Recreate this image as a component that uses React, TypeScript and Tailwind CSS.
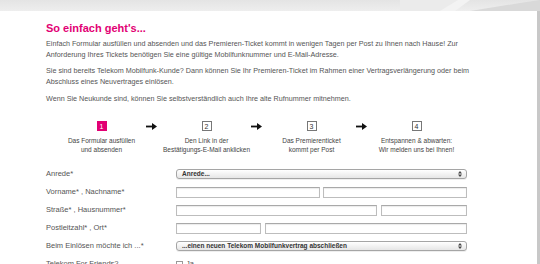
import type { ReactNode } from "react";

const STEPS = [
  { n: 1, lines: ["Das Formular ausfüllen", "und absenden"], active: true },
  { n: 2, lines: ["Den Link in der", "Bestätigungs-E-Mail anklicken"], active: false },
  { n: 3, lines: ["Das Premierenticket", "kommt per Post"], active: false },
  { n: 4, lines: ["Entspannen & abwarten:", "Wir melden uns bei Ihnen!"], active: false },
];

function Arrow() {
  return (
    <div className="relative w-0">
      <svg width="11" height="7" viewBox="0 0 11 7" className="absolute left-[-8px] top-[2px]">
        <rect x="0" y="2.6" width="7" height="1.8" fill="#111" />
        <path d="M6 0 L11 3.5 L6 7 Z" fill="#111" />
      </svg>
    </div>
  );
}

function Select({ label }: { label: string }) {
  return (
    <div className="flex h-[10px] w-full items-center justify-between rounded-[3px] border border-[#a5a5a5] bg-gradient-to-b from-white to-[#e6e6e6] pl-[5px] pr-[4px] shadow-[0_1px_0_#eee]">
      <span className="text-[6.5px] font-bold leading-none text-[#333]">{label}</span>
      <svg width="4" height="6" viewBox="0 0 4 6">
        <path d="M0 2.4 L2 0 L4 2.4 Z M0 3.6 L2 6 L4 3.6 Z" fill="#444" />
      </svg>
    </div>
  );
}

function Input({ w }: { w: string }) {
  return (
    <div
      className={`h-[11px] border border-[#bdbdbd] border-t-[#a9a9a9] bg-white shadow-[inset_0_1px_1px_rgba(0,0,0,0.08)] ${w}`}
    />
  );
}

function Row({ label, children }: { label: string; children: ReactNode }) {
  return (
    <div className="flex h-[18px] items-center">
      <span className="w-[130px] shrink-0 text-[7.5px] text-[#555]">{label}</span>
      <div className="flex w-[291px] items-center justify-between">{children}</div>
    </div>
  );
}

export default function App() {
  return (
    <div className="flex h-[264px] w-[540px] flex-col overflow-hidden bg-white font-['Liberation_Sans',Arial,sans-serif]">
      <div className="relative h-[11px] shrink-0 bg-gradient-to-b from-[#e4e4e4] to-[#eeeeee]">
        <svg className="absolute right-0 top-0" width="140" height="11" viewBox="0 0 140 11">
          <path d="M0 0 L60 0 L50 11 L0 11 Z" fill="#ebebeb" />
          <path d="M70 11 L120 3 L140 0 L140 11 Z" fill="#d9d9d9" />
          <path d="M40 11 L58 0 L70 0 L55 11 Z" fill="#f3f3f3" />
        </svg>
      </div>
      <div className="flex-1 border-r-[3px] border-[#c8c8c8] pl-[46px] pt-[10px] text-[#555]">
        <h1 className="text-[11px] font-bold leading-[14px] text-[#e20074]">So einfach geht's...</h1>
        <div className="mt-[3px] whitespace-nowrap text-[7.2px] leading-[11px]">
          <p className="mb-[5px]">
            Einfach Formular ausfüllen und absenden und das Premieren-Ticket kommt in wenigen Tagen per Post zu Ihnen nach Hause! Zur
            <br />
            Anforderung Ihres Tickets benötigen Sie eine gültige Mobilfunknummer und E-Mail-Adresse.
          </p>
          <p className="mb-[6px]">
            Sie sind bereits Telekom Mobilfunk-Kunde? Dann können Sie Ihr Premieren-Ticket im Rahmen einer Vertragsverlängerung oder beim
            <br />
            Abschluss eines Neuvertrages einlösen.
          </p>
          <p>Wenn Sie Neukunde sind, können Sie selbstverständlich auch Ihre alte Rufnummer mitnehmen.</p>
        </div>

        <div className="ml-[3px] mt-[17px] flex w-[420px] items-start">
          {STEPS.map((s, i) => (
            <div key={s.n} className="flex flex-1 items-start">
              {i > 0 && <Arrow />}
              <div className="flex flex-1 flex-col items-center">
                <div
                  className={
                    s.active
                      ? "flex h-[10px] w-[10px] items-center justify-center bg-[#e20074] text-[7px] leading-none text-white"
                      : "flex h-[10px] w-[10px] items-center justify-center border border-[#777] bg-white text-[7px] leading-none text-[#333]"
                  }
                >
                  {s.n}
                </div>
                <div className="mt-[6px] whitespace-nowrap text-center text-[6.5px] leading-[8.5px] text-[#444]">
                  {s.lines[0]}
                  <br />
                  {s.lines[1]}
                </div>
              </div>
            </div>
          ))}
        </div>

        <div className="mt-[11px]">
          <Row label="Anrede*">
            <Select label="Anrede..." />
          </Row>
          <Row label="Vorname* , Nachname*">
            <Input w="w-[144px]" />
            <Input w="w-[144px]" />
          </Row>
          <Row label="Straße* , Hausnummer*">
            <Input w="w-[201px]" />
            <Input w="w-[86px]" />
          </Row>
          <Row label="Postleitzahl* , Ort*">
            <Input w="w-[85px]" />
            <Input w="w-[202px]" />
          </Row>
          <Row label="Beim Einlösen möchte ich ...*">
            <Select label="...einen neuen Telekom Mobilfunkvertrag abschließen" />
          </Row>
          <Row label="Telekom For Friends?">
            <div className="flex items-center gap-[3px]">
              <div className="h-[7px] w-[7px] border border-[#999] bg-white" />
              <span className="text-[7.5px] text-[#555]">Ja</span>
            </div>
          </Row>
        </div>
      </div>
    </div>
  );
}
